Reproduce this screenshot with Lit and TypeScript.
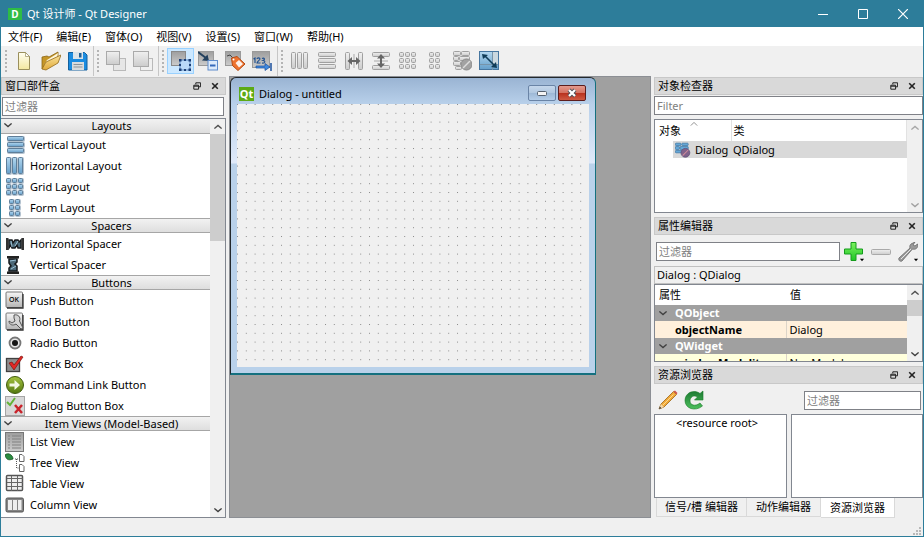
import { LitElement, html, svg, css, nothing, TemplateResult, SVGTemplateResult } from "lit";
import { customElement } from "lit/decorators.js";
import { classMap } from "lit/directives/class-map.js";

type Shape = SVGTemplateResult | SVGTemplateResult[];

/** 20x20 icon frame */
const icon = (shape: Shape, size = "m") =>
  html`<svg class="icon ${size}" viewBox="0 0 20 20" aria-hidden="true">${shape}</svg>`;

const bars = (rects: number[][], fill: string, stroke: string) =>
  rects.map(
    ([x, y, w, h]) =>
      svg`<rect x=${x + 0.5} y=${y + 0.5} width=${w - 1} height=${h - 1} rx="1" fill=${fill} stroke=${stroke}></rect>`
  );

const vertRects = [[2, 1, 17, 5], [2, 7, 17, 5], [2, 13, 17, 5]];
const horRects = [[1, 1, 5, 17], [7, 1, 5, 17], [13, 1, 5, 17]];
const gridRects = [1, 7, 13].flatMap((y) => [1, 7, 13].map((x) => [x, y, 5, 5]));
const formRects = [1, 7, 13].flatMap((y) => [4, 10].map((x) => [x, y, 5, 5]));

const blue = (r: number[][]) => svg`${bars(r.map(([x, y, w, h]) => [x, y, w + 1, h + 1]), "#b4c3d0", "#b4c3d0")}${bars(r, "url(#sky)", "#5f7e99")}`;
const gray = (r: number[][]) => bars(r, "url(#silver)", "#a0a0a0");

const ICONS: Record<string, Shape> = {
  newFile: svg`<path d="M4.500 1.500h7l4 4v13h-11z" fill="url(#paper)" stroke="#9a8f5c"/><path d="M11.500 1.500v4h4z" fill="#fff" stroke="#9a8f5c" stroke-width=".7"/>`,
  open: svg`<path d="M1 18V6l5-1 2 1 9-5v5z" fill="#c59628" stroke="#8b6514" stroke-width=".8"/><path d="M3 14 6 9 17 2l-1 5-11 9z" fill="#fff7da"/><path d="M1 18 5 11l15-7-3 8-12 7z" fill="url(#folder)" stroke="#93691a" stroke-width=".8"/>`,
  save: svg`<path d="M.5 1.500h16l2.500 2.500v15H.5z" fill="#1b8ce0" stroke="#14619e"/><rect x="5" y="1" width="10" height="7" fill="#dbe4ea"/><rect x="11" y="2" width="2.500" height="4.500" fill="#205e93"/><rect x="4" y="11" width="12" height="8" fill="#d9dcdd"/><path d="M5.500 13.500h9m-9 2.500h9" stroke="#8d9499"/>`,
  back: svg`<rect x="7.500" y="7.500" width="12" height="12" fill="#e6e6e6" stroke="#b9b9b9"/><rect x=".5" y=".5" width="13" height="13" fill="url(#silver)" stroke="#aaa"/>`,
  front: svg`<rect x="7.500" y="7.500" width="12" height="12" fill="#f0f0f0" stroke="#b9b9b9"/><rect x=".5" y=".5" width="15" height="15" fill="url(#silver)" stroke="#aaa"/>`,
  widgets: svg`<rect x=".5" y=".5" width="14" height="14" fill="url(#steel)" stroke="#8a8a8a"/><rect x="9" y="9" width="10" height="10" fill="#b9d8f8" stroke="#5b8ac0"/><path d="M8 8h2.500v2.500H8zm5 0h2v2h-2zm4.500 0H20v2.500h-2.500zM8 13h2v2H8zm10 0h2v2h-2zM8 17.500h2.500V20H8zm5 .5h2v2h-2zm4.500-.5H20V20h-2.500z" fill="#1c3f78"/>`,
  signals: svg`<rect x=".5" y=".5" width="15" height="14" fill="url(#steel)" stroke="#9a9a9a"/><path d="m0 1 8 6" stroke="#23405d" stroke-width="2"/><path d="m11 10-7-.5L9.500 3.500z" fill="#23405d"/><rect x="10" y="9.500" width="9.500" height="9.500" fill="#dceafb" stroke="#5f8ccc"/><path d="M12 14.500h5.500" stroke="#3569ba" stroke-width="2"/>`,
  buddies: svg`<rect x=".5" y=".5" width="15" height="14" fill="url(#steel)" stroke="#9a9a9a"/><path d="m2 5 3-1 4 4" fill="none" stroke="#444"/><path d="M6.500 7 12 5.500l8 7.500-7 6.500-5.500-5z" fill="#ee7330" stroke="#b34a14"/><path d="m10.500 12 3.500-3 4 4-4 3.500z" fill="#fdf1ea"/><circle cx="8.500" cy="8.500" r="1" fill="#fff"/>`,
  tabOrder: svg`<rect x=".5" y=".5" width="17" height="16" fill="url(#steel)" stroke="#9a9a9a"/><path d="M1.500 8 3 7v5M5 8c0-1.500 3-1.500 3 0 0 1-3 2.500-3 4h3.500M10 7.500c2.500-1 3.500 1 1 2 3 .5 2 3-1 2.500" fill="none" stroke="#1e4f8f" stroke-width="1.100"/><path d="M4 15h9v-2.500l5 3.500-5 3.500V17H4z" fill="#3f8ae0" stroke="#1b4f9c" stroke-width=".7"/><path d="M19 12v8" stroke="#1b4f9c" stroke-width="1.500"/>`,
  hLayout: gray(horRects),
  vLayout: gray([[1, 1, 18, 5], [1, 7, 18, 5], [1, 13, 18, 5]]),
  hSplit: svg`${gray([[1, 1, 5, 18], [14, 1, 5, 18]])}<path d="M10 3v14" stroke="#aaa"/><path d="m3.500 10 4.500-4v3h4V6l4.500 4-4.500 4v-3H8v3z" fill="#666"/>`,
  vSplit: svg`${gray([[1, 1, 18, 5], [1, 14, 18, 5]])}<path d="M3 10h14" stroke="#aaa"/><path d="m10 3 4 4.500h-3v5h3L10 17l-4-4.500h3v-5H6z" fill="#666"/>`,
  gridGray: gray(gridRects),
  formGray: gray(formRects),
  breakGray: svg`${gray([[1, 0, 8, 5], [9, 0, 9, 5], [1, 5, 6, 5], [7, 5, 11, 5], [1, 10, 8, 5], [3, 15, 7, 4]])}<circle cx="14.500" cy="13.500" r="5.500" fill="#a2a2a2" stroke="#8a8a8a"/><path d="m11 17 7-7" stroke="#ddd" stroke-width="1.500"/>`,
  adjust: svg`<rect x=".5" y=".5" width="19" height="18" fill="url(#sky)" stroke="#4676a0"/><rect x="13" y="1" width="6" height="12" fill="#cbd8df"/><path d="M1 13.500h18M13.500 1v18" stroke="#7794a9"/><path d="m6 5 9 9" stroke="#103c58" stroke-width="1.600"/><path d="m3 3 6 1-5 4zM18 17l-6-1 5-5z" fill="#103c58"/>`,
  vert: blue(vertRects),
  hor: blue(horRects),
  grid: blue(gridRects),
  form: blue(formRects),
  hSpacer: svg`<path d="M1 4h2.500v12H1zM16.500 4H19v12h-2.500z" fill="#333"/><path d="M4 6h3l1 3 2-3h3l1 2 2-2v8h-3l-1-3-2 3H7l-1-3-2 3z" fill="#4b6878" stroke="#15191c" stroke-width="1.400"/><path d="m6 7 1 6m3-1 3-5" stroke="#9ac0d5"/>`,
  vSpacer: svg`<path d="M2 1h12v2.500H2zM2 16.500h12V19H2z" fill="#222"/><path d="M4 4h8v3l-2 2 2 2v5H4v-3l2-2-2-3z" fill="#4b6878" stroke="#15191c" stroke-width="1.500"/><path d="m5 6 6-1m-5 9 5-3" stroke="#9ac0d5"/>`,
  push: svg`<rect x="1" y="1" width="16.500" height="15.500" rx="1" fill="url(#key)" stroke="#777"/><path d="M2 17h16V3" fill="none" stroke="#333" stroke-width="1.300"/><text x="9" y="11" text-anchor="middle" class="ok">OK</text>`,
  tool: svg`<rect x="1" y="1" width="16.500" height="16.500" rx="1" fill="url(#key)" stroke="#777"/><path d="M2 18h16V3" fill="none" stroke="#333" stroke-width="1.300"/><path d="M9 3c4-1 7 2 5.500 6l3.500 7-2 1-5-5c-3 2-7 1-7-3l3 2 3-2-1-3z" fill="#d4d4d4" stroke="#555"/>`,
  radio: svg`<circle cx="10" cy="10" r="5.500" fill="#e6e6e6" stroke="#777" stroke-width="1.800"/><circle cx="10" cy="10" r="3" fill="#151515"/>`,
  check: svg`<rect x="1.500" y="4.500" width="13" height="13" fill="#8e8e8e" stroke="#404040" stroke-width="1.300"/><path d="m4 9 3-1 2 3 7-9 2 1-9 13z" fill="#e22824" stroke="#7d1210" stroke-width=".7"/>`,
  command: svg`<circle cx="10" cy="10" r="8.500" fill="url(#olive)" stroke="#3f5a0c"/><path d="M4.500 8.500H9.500V5l5.500 5-5.500 5v-3.500H4.500z" fill="#f3f8e4"/>`,
  dialogBox: svg`<rect x=".5" y=".5" width="19" height="19" fill="#d8d8d8" stroke="#a5a5a5"/><path d="m2 6 3 3 5-7" fill="none" stroke="#62b236" stroke-width="2"/><path d="m10 9 7 8m0-8-7 8" stroke="#c9232b" stroke-width="2.500"/>`,
  list: svg`<rect x=".5" y=".5" width="18" height="19" fill="url(#steel)" stroke="#777"/><path d="M3 4h2m2 0h9M3 7h2m2 0h9M3 10h2m2 0h9M3 13h2m2 0h9M3 16h2m2 0h9" stroke="#818181"/>`,
  tree: svg`<path d="M0 2c3-3 8 0 8 4C3 8 1 6 0 2z" fill="#2a8c40" stroke="#14501f" stroke-width=".8"/><path d="M10 6h4M11.500 6v9h2" fill="none" stroke="#555" stroke-dasharray="1 1"/><path d="M14.500 1.500h2.500l2 2v5h-4.500zM14.500 11.500h2.500l2 2v5h-4.500z" fill="#fff" stroke="#666"/>`,
  table: svg`<rect x="1.500" y="1.500" width="16" height="15" rx="1" fill="#eee" stroke="#555" stroke-width="1.500"/><path d="M2 4.500h16M2 8.500h16M2 12.500h16M6.500 2v15M12.500 2v15" stroke="#666"/>`,
  column: svg`<rect x="1" y="3" width="17.500" height="14" rx="1.500" fill="#858585" stroke="#555"/><path d="M3 5h4v10H3zM8 5h4v10H8zM13 5h3.500v10H13z" fill="#eee"/>`,
  undo: svg`<rect x="1" y="1" width="18" height="16" fill="#333"/>`,
  dialog: svg`${bars([[0, 1, 8, 4], [8, 1, 9, 4], [0, 5, 6, 5], [6, 5, 11, 5], [0, 10, 9, 4]], "#63a7d8", "#3f78a7")}<circle cx="13" cy="13.500" r="5.500" fill="#80628a" stroke="#5e5179"/><path d="m9.500 17 7-7" stroke="#d18d9a" stroke-width="1.300"/>`,
  plus: svg`<path d="M7 .5h5V7h6.500v5H12v6.500H7V12H.5V7H7z" fill="url(#lime)" stroke="#159c1c"/>`,
  minus: svg`<rect x=".5" y="7.500" width="19" height="5" rx="1" fill="url(#silver)" stroke="#a9a9a9"/>`,
  wrench: svg`<path d="M13 2 17 0l-2 3 2 1 2.500-2c1 4-2 6-5 5L4 19c-2 1-4-1-3-3L12 6c-.5-2 0-3 1-4z" fill="#9a9a9a" stroke="#676767" stroke-width=".8"/><path d="m3 17 10-10" stroke="#e6e6e6"/>`,
  pencil: svg`<path d="m1 19 2-5L15.500 1.500l3 3L6 17z" fill="#f0a93a" stroke="#9a6416" stroke-width=".8"/><path d="m1 19 2-5 3 3z" fill="#f4d9ad"/><path d="m1 19 .8-2.500 1.700 1.700z" fill="#333"/><path d="m15.500 1.500 3 3 1-1.500L17 .5z" fill="#d0564e"/><path d="m5 15 10.500-10.500" stroke="#ffd98a"/>`,
  reload: svg`<path d="M16 3.500 19 1v9h-8.500L13.500 7C10 4.500 6 7 6 11s5 6 10 2l2.500 3C11 22 1 18.500 1 10.500S10-1 16 3.500z" fill="url(#leaf)" stroke="#177a26" stroke-width=".6"/>`,
  closeMark: svg`<path d="m3 3 14 14M17 3 3 17" stroke="#222" stroke-width="4"/>`,
  floatMark: svg`<path d="M7 6V2h12v10h-4" fill="none" stroke="#222" stroke-width="2.500"/><path d="M2 8h12v10H2zM2 10.500h12" fill="none" stroke="#222" stroke-width="2.500"/>`,
  down: svg`<path d="m1 6 9 8 9-8" fill="none" stroke="#404040" stroke-width="3.500"/>`,
  up: svg`<path d="m1 14 9-8 9 8" fill="none" stroke="#505050" stroke-width="3.500"/>`,
  caret: svg`<path d="M3 6h14l-7 8z" fill="#000"/>`,
  sort: svg`<path d="m2 14 8-8 8 8" fill="none" stroke="#777" stroke-width="2"/>`,
};

const TOOLS = [
  [["newFile", "新建"], ["open", "打开"], ["save", "保存"]],
  [["back", "下移"], ["front", "上移"]],
  [["widgets", "编辑窗口部件"], ["signals", "编辑信号/槽"], ["buddies", "编辑伙伴"], ["tabOrder", "编辑 Tab 顺序"]],
  [["hLayout", "水平布局"], ["vLayout", "垂直布局"], ["hSplit", "水平分裂器"], ["vSplit", "垂直分裂器"], ["gridGray", "栅格布局"], ["formGray", "窗体布局"], ["breakGray", "打破布局"], ["adjust", "调整大小"]],
];

const GROUPS: [string, [string, string][]][] = [
  ["Layouts", [["vert", "Vertical Layout"], ["hor", "Horizontal Layout"], ["grid", "Grid Layout"], ["form", "Form Layout"]]],
  ["Spacers", [["hSpacer", "Horizontal Spacer"], ["vSpacer", "Vertical Spacer"]]],
  ["Buttons", [["push", "Push Button"], ["tool", "Tool Button"], ["radio", "Radio Button"], ["check", "Check Box"], ["command", "Command Link Button"], ["dialogBox", "Dialog Button Box"]]],
  ["Item Views (Model-Based)", [["list", "List View"], ["tree", "Tree View"], ["table", "Table View"], ["column", "Column View"], ["undo", ""]]],
];

@customElement("app-root")
export class AppRoot extends LitElement {
  static styles = css`
    :host {
      display: flex;
      flex-direction: column;
      box-sizing: border-box;
      height: 100vh;
      border: solid #2d7d9a;
      border-width: 0 1px 1px;
      background: #f0f0f0;
      color: #000;
      font: 11px/16px "Noto Sans", "Noto Sans CJK SC", sans-serif;
      overflow: hidden;
    }
    *, *::before, *::after { box-sizing: border-box; }
    button, input { font: inherit; color: inherit; }
    button { border: 0; background: none; padding: 0; margin: 0; display: flex; align-items: center; justify-content: center; }
    input {
      border: 1px solid #7f8187;
      background: #fff;
      height: 19px;
      padding: 0 2px;
      min-width: 0;
      border-radius: 0;
      outline: 0;
    }
    input::placeholder { color: #808080; opacity: 1; }
    ul { list-style: none; margin: 0; padding: 0; }
    h1, h2 { font: inherit; margin: 0; }
    .defs { position: absolute; width: 0; height: 0; }
    .icon { flex: none; display: block; }
    .m { width: 20px; height: 20px; }
    .s { width: 16px; height: 16px; }
    .xs { width: 8px; height: 8px; }
    .ok { font: 500 7px "Noto Sans", sans-serif; }

    .titlebar { display: flex; align-items: center; flex: none; height: 27px; background: #2d7d9a; color: #fff; padding-left: 7px; }
    .titlebar h1 { flex: 1; margin-left: 5px; }
    .logo { display: block; width: 14px; height: 12px; background: #2ebc46; color: #fff; font-weight: bold; font-size: 10px; line-height: 12px; text-align: center; }
    .win { width: 40px; height: 27px; }
    .win svg { width: 10px; height: 10px; }

    .menubar { display: flex; flex: none; height: 19px; background: #fff; }
    .menubar button { padding: 0 7px; }

    .toolbar { display: flex; flex: none; height: 30px; padding-left: 1px; }
    .group { display: flex; align-items: center; padding: 0 2px 0 3px; border-right: 1px solid #c6c6c6; }
    .group:last-child { border: 0; }
    .group::before { content: ""; width: 2px; height: 23px; margin-right: 3px; background: repeating-linear-gradient(#b4b4b4 0 2px, transparent 2px 4px); }
    .group button { width: 27px; height: 26px; }
    .group .on { background: #cce8ff; border: 1px solid #99d1ff; }

    .body { flex: 1; min-height: 0; display: grid; grid-template-columns: 225px minmax(0, 1fr) 269px; gap: 3px; }

    .dock-title { display: flex; align-items: center; flex: none; height: 18px; padding: 0 1px 0 3px; background: #d9d9d9; border: 1px solid #c8c8c8; }
    .dock-title h2 { flex: 1; }
    .dock-title button { width: 18px; height: 16px; }

    .left { display: flex; flex-direction: column; min-height: 0; padding-top: 1px; }
    .left > input { margin: 2px 2px 2px 1px; }
    .well { display: flex; border: 1px solid #828790; background: #fff; min-height: 0; overflow: hidden; }
    .left .well { flex: 1; border-left: 0; }
    .tree { flex: 1; min-width: 0; overflow: hidden; }
    .cat { width: 100%; height: 15px; position: relative; border-bottom: 1px solid #a6a6a6; background: linear-gradient(#f2f2f2, #dedede); }
    .cat:not(.first) { border-top: 1px solid #a6a6a6; }
    .cat svg { position: absolute; left: 3px; top: 2px; }
    .cat span { flex: 1; padding-left: 12px; text-align: center; }
    .item { width: 100%; height: 21px; padding-left: 4px; justify-content: flex-start; gap: 5px; }

    .scroll { flex: none; width: 15px; display: flex; flex-direction: column; background: #f0f0f0; }
    .scroll button { height: 15px; flex: none; }
    .scroll .track { flex: 1; min-height: 0; }
    .thumb { background: #cdcdcd; height: 29%; min-height: 16px; }
    .off { opacity: .45; }

    .mdi { background: #a0a0a0; border: 1px solid #8c8f94; overflow: hidden; display: flex; align-items: flex-start; }
    .form {
      display: flex; flex-direction: column;
      flex: none; width: 366px; max-width: 100%; height: 298px;
      border: solid #23282c; border-width: 1px 1px 2px 1px; border-right-color: #14707f; border-bottom-color: #14707f;
      border-radius: 6px 6px 0 0;
      background: linear-gradient(#9ab4d3, #b8d0ea 26px, #e0eafa 85px, #b9d1ea 86px);
      padding: 0 6px 6px;
    }
    .form-title { display: flex; align-items: center; height: 26px; flex: none; padding: 6px 0 0 2px; gap: 5px; }
    .form-title h2 { flex: 1; }
    .qt { background: #5caa15; color: #fff; width: 15px; height: 14px; font-size: 11px; line-height: 13px; font-weight: bold; text-align: center; }
    .fbtn { width: 28px; height: 16px; border: 1px solid #6a84a6; border-radius: 2px; background: linear-gradient(#c5d7eb, #b0c7e0 50%, #9db8d6 50%, #b4cde8); }
    .fbtns { display: flex; gap: 2px; padding: 0 3px 2px 0; }
    .fbtn.close { border-color: #5c1d1d; background: linear-gradient(#e39a8f, #d4705f 50%, #b8301c 50%, #cf5a43); }
    .fbtn svg { width: 12px; height: 10px; }
    .canvas { flex: 1; width: 100%; min-height: 0; background: #f0f0f0; display: block; }

    .right { display: grid; grid-template-rows: 140fr 149fr 132fr 20px; padding-top: 1px; min-height: 0; min-width: 0; }
    .dock { display: flex; flex-direction: column; min-height: 0; min-width: 0; }
    .inspector, .props { padding-bottom: 4px; }
    .inspector > input { margin: 1px 0 4px; }
    .inspector .well { flex: 1; }
    table { width: 100%; border-collapse: collapse; table-layout: fixed; }
    th, td { text-align: left; padding: 0 0 0 4px; height: 17px; font-weight: normal; white-space: nowrap; }
    .inspector th { height: 21px; border-right: 1px solid #e2e2e2; }
    .inspector .c1 { width: 76px; }
    .inspector th:last-child, .inspector td:last-child { padding-left: 2px; }
    .sorted { position: relative; }
    .sorted svg { position: absolute; left: 31px; top: -3px; }
    .node { display: flex; align-items: center; gap: 4px; height: 17px; margin-left: 14px; padding-left: 2px; background: #d9d9d9; }
    .plain { background: #d9d9d9; }

    .prop-tools { display: flex; align-items: center; flex: none; height: 31px; padding: 2px 2px 0; }
    .prop-tools input { flex: 1; }
    .tool { width: 27px; height: 25px; position: relative; }
    .tool .xs { position: absolute; right: 2px; bottom: 1px; width: 6px; height: 6px; }
    .object { flex: none; height: 18px; border: 1px solid #c0c0c0; padding-left: 2px; }
    .props .well { flex: 1; }
    .props th { height: 20px; }
    .props td { padding-left: 3px; }
    .props .c1 { width: 131px; }
    .props .sec td { height: 16px; padding-left: 4px; background: #a0a0a0; color: #fff; font-weight: bold; }
    .sec button { gap: 8px; font-weight: bold; }
    .peach td { background: #fff0dc; }
    .yellow td { background: #ffffdc; }
    .props .name { font-weight: bold; padding-left: 20px; border-right: 1px solid #dcd4c8; }

    .res-tools { display: flex; align-items: center; flex: none; height: 30px; padding: 2px 2px 0 1px; }
    .res-tools .tool { width: 26px; }
    .res-tools input { width: 117px; margin-left: auto; }
    .panes { flex: 1; min-height: 0; display: grid; grid-template-columns: 1fr 1fr; gap: 4px; }
    .root-item { align-self: flex-start; margin-left: 21px; }

    .tabs { display: flex; align-items: flex-start; padding-left: 2px; }
    .tabs button { height: 19px; padding: 0 8px; border: 1px solid #d9d9d9; border-top: 0; }
    .tabs button + button { border-left: 0; padding: 0 9px; }
    .tabs .sel { background: #fff; height: 20px; }

    .status { flex: none; height: 18px; display: flex; justify-content: flex-end; align-items: flex-end; padding: 0 2px 1px 0; }
    .grip { width: 9px; height: 9px; fill: #b8b8b8; }
  `;

  private defs() {
    const g = (id: string, a: string, b: string) =>
      svg`<linearGradient id=${id} x1="0" y1="0" x2="0" y2="1"><stop offset="0" stop-color=${a}></stop><stop offset="1" stop-color=${b}></stop></linearGradient>`;
    return html`<svg class="defs" aria-hidden="true"><defs>
      ${g("sky", "#b4d8f0", "#659fca")}${g("silver", "#f0f0f0", "#cccccc")}${g("steel", "#9e9e9e", "#cccccc")}
      ${g("paper", "#fffef0", "#f3e7a0")}${g("folder", "#fbe39a", "#dfa93a")}${g("key", "#f6f6f6", "#b4b4b4")}
      ${g("olive", "#a5c340", "#54780f")}${g("lime", "#7df25f", "#1fc626")}${g("leaf", "#1d7a33", "#4cc05c")}
    </defs></svg>`;
  }

  private dockTitle(title: string) {
    return html`<header class="dock-title"><h2>${title}</h2>
      <button aria-label="浮动">${icon(ICONS.floatMark, "xs")}</button>
      <button aria-label="关闭">${icon(ICONS.closeMark, "xs")}</button></header>`;
  }

  private scrollbar(thumb: boolean): TemplateResult {
    return html`<div class="scroll">
      <button class=${thumb ? "" : "off"} aria-label="向上滚动">${icon(ICONS.up, "xs")}</button>
      <div class="track">${thumb ? html`<div class="thumb"></div>` : nothing}</div>
      <button class=${thumb ? "" : "off"} aria-label="向下滚动">${icon(ICONS.down, "xs")}</button>
    </div>`;
  }

  render() {
    return html`
      ${this.defs()}
      <header class="titlebar">
        <span class="logo" aria-hidden="true">D</span>
        <h1>Qt 设计师 - Qt Designer</h1>
        <button class="win" aria-label="最小化"><svg viewBox="0 0 10 10"><path d="M0 5.500h10" stroke="#fff"/></svg></button>
        <button class="win" aria-label="最大化"><svg viewBox="0 0 10 10"><path d="M.5 .5h9v9h-9z" fill="none" stroke="#fff"/></svg></button>
        <button class="win" aria-label="关闭"><svg viewBox="0 0 10 10"><path d="m0 0 10 10M10 0 0 10" stroke="#fff" stroke-width="1.200"/></svg></button>
      </header>
      <nav class="menubar">
        ${["文件(F)", "编辑(E)", "窗体(O)", "视图(V)", "设置(S)", "窗口(W)", "帮助(H)"].map((m) => html`<button>${m}</button>`)}
      </nav>
      <div class="toolbar" role="toolbar">
        ${TOOLS.map((g) => html`<div class="group">${g.map(([i, l]) => html`<button class=${classMap({ on: i === "widgets" })} aria-label=${l}>${icon(ICONS[i])}</button>`)}</div>`)}
      </div>
      <main class="body">
        <section class="left">
          ${this.dockTitle("窗口部件盒")}
          <input type="text" placeholder="过滤器" aria-label="过滤器" />
          <div class="well">
            <div class="tree">
              ${GROUPS.map(([name, items], n) => html`
                <button class=${classMap({ cat: true, first: n === 0 })}>${icon(ICONS.down, "xs")}<span>${name}</span></button>
                <ul>${items.map(([i, l]) => html`<li><button class="item">${icon(ICONS[i])}<span>${l}</span></button></li>`)}</ul>`)}
            </div>
            ${this.scrollbar(true)}
          </div>
        </section>
        <section class="mdi">
          <article class="form">
            <header class="form-title">
              <span class="qt" aria-hidden="true">Qt</span>
              <h2>Dialog - untitled</h2>
              <div class="fbtns">
                <button class="fbtn" aria-label="最小化"><svg viewBox="0 0 12 10"><rect x="1.500" y="3.500" width="9" height="4" rx="1" fill="#f4f4f4" stroke="#55606e"/></svg></button>
                <button class="fbtn close" aria-label="关闭"><svg viewBox="0 0 12 10"><path d="m3 2 6 6M9 2 3 8" stroke="#4c4f57" stroke-width="4"/><path d="m3 2 6 6M9 2 3 8" stroke="#fff" stroke-width="2.200"/></svg></button>
              </div>
            </header>
            <svg class="canvas" aria-hidden="true">
              <defs><pattern id="dots" width="8.800" height="8.800" patternUnits="userSpaceOnUse"><rect width="1" height="1" fill="#8c8c8c"/></pattern></defs>
              <rect width="100%" height="100%" fill="url(#dots)"></rect>
            </svg>
          </article>
        </section>
        <aside class="right">
          <section class="dock inspector">
            ${this.dockTitle("对象检查器")}
            <input type="text" placeholder="Filter" aria-label="Filter" />
            <div class="well">
              <div class="tree">
                <table>
                  <colgroup><col class="c1" /><col /></colgroup>
                  <thead><tr><th><div class="sorted">对象${icon(ICONS.sort, "xs")}</div></th><th>类</th></tr></thead>
                  <tbody><tr><td><div class="node">${icon(ICONS.dialog, "s")}Dialog</div></td><td class="plain">QDialog</td></tr></tbody>
                </table>
              </div>
              ${this.scrollbar(false)}
            </div>
          </section>
          <section class="dock props">
            ${this.dockTitle("属性编辑器")}
            <div class="prop-tools">
              <input type="text" placeholder="过滤器" aria-label="过滤属性" />
              <button class="tool" aria-label="添加动态属性">${icon(ICONS.plus)}${icon(ICONS.caret, "xs")}</button>
              <button class="tool" aria-label="删除动态属性">${icon(ICONS.minus)}</button>
              <button class="tool" aria-label="配置">${icon(ICONS.wrench)}${icon(ICONS.caret, "xs")}</button>
            </div>
            <div class="object">Dialog : QDialog</div>
            <div class="well">
              <div class="tree">
                <table>
                  <colgroup><col class="c1" /><col /></colgroup>
                  <thead><tr><th>属性</th><th>值</th></tr></thead>
                  <tbody>
                    <tr class="sec"><td colspan="2"><button>${icon(ICONS.down, "xs")}QObject</button></td></tr>
                    <tr class="peach"><td class="name">objectName</td><td>Dialog</td></tr>
                    <tr class="sec"><td colspan="2"><button>${icon(ICONS.down, "xs")}QWidget</button></td></tr>
                    <tr class="yellow"><td class="name">windowModality</td><td>NonModal</td></tr>
                  </tbody>
                </table>
              </div>
              ${this.scrollbar(true)}
            </div>
          </section>
          <section class="dock resources">
            ${this.dockTitle("资源浏览器")}
            <div class="res-tools">
              <button class="tool" aria-label="编辑资源">${icon(ICONS.pencil)}</button>
              <button class="tool" aria-label="重新载入">${icon(ICONS.reload)}</button>
              <input type="text" placeholder="过滤器" aria-label="过滤资源" />
            </div>
            <div class="panes">
              <div class="well"><button class="root-item">&lt;resource root&gt;</button></div>
              <div class="well"></div>
            </div>
          </section>
          <div class="tabs" role="tablist">
            <button role="tab">信号/槽 编辑器</button>
            <button role="tab">动作编辑器</button>
            <button role="tab" class="sel" aria-selected="true">资源浏览器</button>
          </div>
        </aside>
      </main>
      <footer class="status">
        <svg class="grip" viewBox="0 0 9 9" aria-hidden="true"><path d="M7 1h2v2H7zM4 4h2v2H4zM7 4h2v2H7zM1 7h2v2H1zM4 7h2v2H4zM7 7h2v2H7z"/></svg>
      </footer>
    `;
  }
}
